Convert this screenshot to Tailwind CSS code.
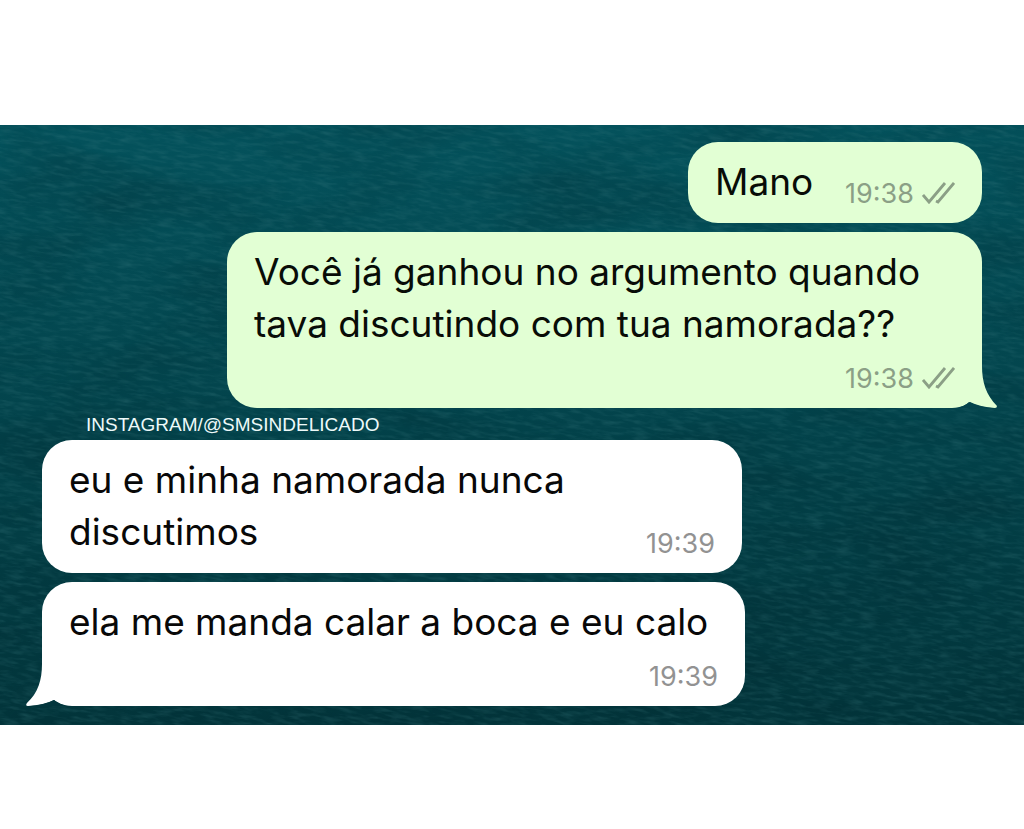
<!DOCTYPE html>
<html lang="pt-BR">
<head>
<meta charset="utf-8">
<meta name="viewport" content="width=device-width, initial-scale=1">
<title>Conversa</title>
<script src="https://cdn.jsdelivr.net/npm/@tailwindcss/browser@4"></script>
</head>
<body class="min-h-screen bg-white pt-[125px] pb-[104px] font-['Inter','Liberation_Sans',sans-serif]">
<main class="relative isolate overflow-hidden bg-linear-to-b from-[#04525c] via-[#03434b] to-[#03353b] px-[42px] pt-[17px] pb-[19px]">
  <!-- Water surface wallpaper -->
  <svg class="absolute inset-0 -z-10 h-full w-full" aria-hidden="true">
    <defs>
      <filter id="ripples" x="0" y="0" width="100%" height="100%" color-interpolation-filters="sRGB">
        <feTurbulence type="fractalNoise" baseFrequency="0.06 0.28" numOctaves="3" seed="7"/>
        <feColorMatrix values="0 0 0 0 0.25  0 0 0 0 0.5  0 0 0 0 0.52  1.2 0 0 0 -0.5"/>
      </filter>
      <filter id="swell" x="0" y="0" width="100%" height="100%" color-interpolation-filters="sRGB">
        <feTurbulence type="fractalNoise" baseFrequency="0.006 0.02" numOctaves="3" seed="3"/>
        <feColorMatrix values="0 0 0 0 0  0 0 0 0 0.13  0 0 0 0 0.16  1 0 0 0 -0.4"/>
      </filter>
    </defs>
    <rect width="100%" height="100%" filter="url(#swell)" opacity="0.5"/>
    <rect x="-10%" y="-30%" width="120%" height="160%" filter="url(#ripples)" transform="rotate(8 512 300)" opacity="0.5"/>
  </svg>

  <section class="flex flex-col items-end gap-[9px]">
    <article class="flex w-full max-w-[294px] items-end justify-between rounded-[30px] bg-[#e2ffd4] px-[27px] pt-[14px] pb-[13px]">
      <p class="mb-[2px] text-[37px] leading-[52px] text-[#080c07]">Mano</p>
      <div class="flex items-center gap-[8px] text-[#8b9f86]">
        <time class="text-[27px] leading-[32px]">19:38</time>
        <svg class="h-[24px] w-[33px]" viewBox="0 0 33 24" fill="none" stroke="currentColor" stroke-width="2.8" aria-label="Enviada"><path d="M1 13l6 7L23 1M14 19l2 1L32 1"/></svg>
      </div>
    </article>
    <article class="relative flex w-full max-w-[755px] flex-col rounded-[30px] bg-[#e2ffd4] px-[27px] pt-[14px] pb-[13px]">
      <p class="text-[37px] leading-[52px] text-[#080c07]">Você já ganhou no argumento quando<br>tava discutindo com tua namorada??</p>
      <div class="mt-[13px] flex items-center gap-[8px] self-end text-[#8b9f86]">
        <time class="text-[27px] leading-[32px]">19:38</time>
        <svg class="h-[24px] w-[33px]" viewBox="0 0 33 24" fill="none" stroke="currentColor" stroke-width="2.8" aria-label="Enviada"><path d="M1 13l6 7L23 1M14 19l2 1L32 1"/></svg>
      </div>
      <svg class="absolute -right-[15px] bottom-0 h-[42px] w-[45px]" viewBox="0 0 45 42" aria-hidden="true"><path fill="#e2ffd4" d="M10 0H30C30 16 34 29 45 40Q45 42 43 42Q28 41 18 36L10 32Z"/><path fill="#04434c" d="M4 42Q12 41 17 36Q26 41 40 42Z"/></svg>
    </article>
  </section>

  <p class="pt-[2px] pl-[44px] font-['Liberation_Sans',Arial,sans-serif] text-[19px] leading-[30px] text-[#eefafa]">INSTAGRAM/@SMSINDELICADO</p>

  <section class="flex flex-col items-start gap-[9px]">
    <article class="flex w-full max-w-[700px] items-end rounded-[30px] bg-white px-[27px] pt-[14px] pb-[13px]">
      <p class="mb-[2px] min-w-0 flex-1 text-[37px] leading-[52px] text-[#080808]">eu e minha namorada nunca discutimos</p>
      <time class="text-[27px] leading-[32px] text-[#929292]">19:39</time>
    </article>
    <article class="relative flex w-full max-w-[703px] flex-col rounded-[30px] bg-white px-[27px] pt-[14px] pb-[13px]">
      <p class="text-[37px] leading-[52px] text-[#080808]">ela me manda calar a boca e eu calo</p>
      <time class="mt-[13px] self-end text-[27px] leading-[32px] text-[#929292]">19:39</time>
      <svg class="absolute -left-[16px] bottom-0 h-[42px] w-[46px]" viewBox="0 0 46 42" aria-hidden="true"><path fill="#fff" d="M46 0H16C16 16 12 29 1 39Q-1 42 2 42Q18 41 28 36L46 30Z"/><path fill="#03363d" d="M42 42Q34 41 28 36Q19 41 5 42Z"/></svg>
    </article>
  </section>
</main>
</body>
</html>
